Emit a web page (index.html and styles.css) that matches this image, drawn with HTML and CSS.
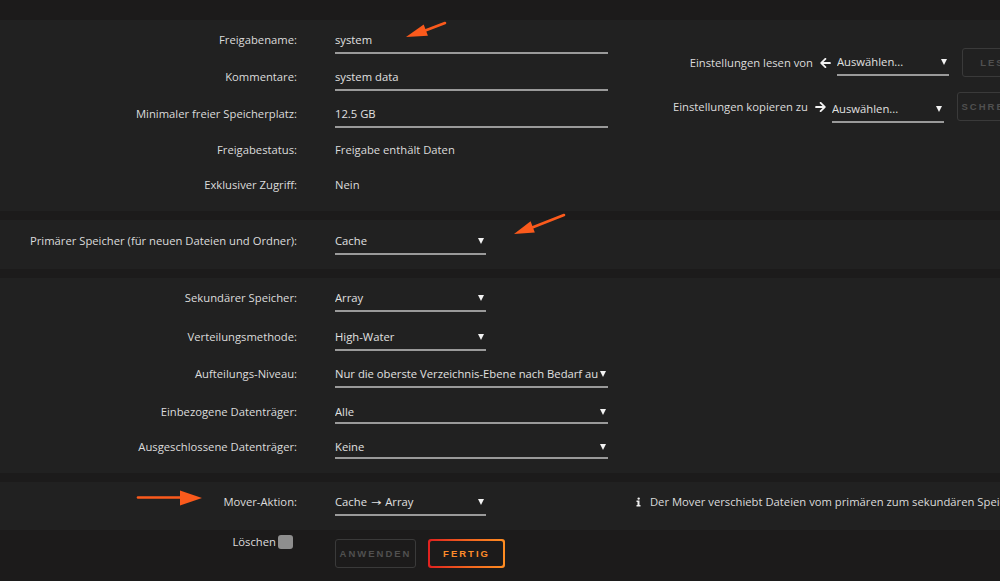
FILE: index.html
```html
<!DOCTYPE html>
<html lang="de">
<head>
<meta charset="utf-8">
<title>Freigabe system</title>
<link rel="stylesheet" href="styles.css">
</head>
<body>
<div class="topbar"></div>
<div class="panels">
  <section class="panel p1">
    <div class="form">
      <div class="row r37">
        <label class="lbl">Freigabename:</label>
        <div class="field long"><span class="txt">system</span></div>
      </div>
      <div class="row r37">
        <label class="lbl">Kommentare:</label>
        <div class="field long"><span class="txt">system data</span></div>
      </div>
      <div class="row r37">
        <label class="lbl">Minimaler freier Speicherplatz:</label>
        <div class="field long"><span class="txt">12.5 GB</span></div>
      </div>
      <div class="row r35">
        <label class="lbl">Freigabestatus:</label>
        <div class="val">Freigabe enthält Daten</div>
      </div>
      <div class="row r35">
        <label class="lbl">Exklusiver Zugriff:</label>
        <div class="val">Nein</div>
      </div>
    </div>
    <div class="clone">
      <div class="crow">
        <span class="clbl">Einstellungen lesen von</span>
        <svg class="arrow" viewBox="0 0 448 512" aria-hidden="true"><path d="M257.5 445.1l-22.2 22.2c-9.4 9.4-24.6 9.4-33.9 0L7 273c-9.4-9.4-9.4-24.6 0-33.9L201.4 44.7c9.4-9.4 24.6-9.4 33.9 0l22.2 22.2c9.5 9.5 9.3 25-.4 34.3L136.6 216H424c13.3 0 24 10.7 24 24v32c0 13.3-10.7 24-24 24H136.6l120.5 114.8c9.8 9.3 10 24.8.4 34.3z"/></svg>
        <div class="field small"><span class="txt">Auswählen...</span><span class="caret"></span></div>
        <button class="btn btn-off read">Lesen</button>
      </div>
      <div class="crow">
        <span class="clbl">Einstellungen kopieren zu</span>
        <svg class="arrow" viewBox="0 0 448 512" aria-hidden="true"><path d="M190.5 66.9l22.2-22.2c9.4-9.4 24.6-9.4 33.9 0L441 239c9.4 9.4 9.4 24.6 0 33.9L246.6 467.3c-9.4 9.4-24.6 9.4-33.9 0l-22.2-22.2c-9.5-9.5-9.3-25 .4-34.3L311.4 296H24c-13.3 0-24-10.7-24-24v-32c0-13.3 10.7-24 24-24h287.4L190.9 101.2c-9.8-9.3-10-24.8-.4-34.3z"/></svg>
        <div class="field small low"><span class="txt">Auswählen...</span><span class="caret"></span></div>
        <button class="btn btn-off write">Schreiben</button>
      </div>
    </div>
  </section>

  <section class="panel p2">
    <div class="row r37">
      <label class="lbl">Primärer Speicher (für neuen Dateien und Ordner):</label>
      <div class="field mid"><span class="txt">Cache</span><span class="caret"></span></div>
    </div>
  </section>

  <section class="panel p3">
    <div class="row r39">
      <label class="lbl">Sekundärer Speicher:</label>
      <div class="field mid"><span class="txt">Array</span><span class="caret"></span></div>
    </div>
    <div class="row r37">
      <label class="lbl">Verteilungsmethode:</label>
      <div class="field mid"><span class="txt">High-Water</span><span class="caret"></span></div>
    </div>
    <div class="row r39">
      <label class="lbl">Aufteilungs-Niveau:</label>
      <div class="field long"><span class="txt">Nur die oberste Verzeichnis-Ebene nach Bedarf au</span><span class="caret tight"></span></div>
    </div>
    <div class="row r35">
      <label class="lbl">Einbezogene Datenträger:</label>
      <div class="field long compact"><span class="txt">Alle</span><span class="caret"></span></div>
    </div>
    <div class="row r35">
      <label class="lbl">Ausgeschlossene Datenträger:</label>
      <div class="field long compact"><span class="txt">Keine</span><span class="caret"></span></div>
    </div>
  </section>

  <section class="panel p4">
    <div class="row r37">
      <label class="lbl">Mover-Aktion:</label>
      <div class="valrow">
        <div class="field mid"><span class="txt">Cache <span class="to">→</span> Array</span><span class="caret"></span></div>
        <p class="info">
          <svg class="info-ico" viewBox="0 0 6 11" aria-hidden="true"><circle cx="3.2" cy="1.4" r="1.4"/><path d="M0.6 3.8h3.6v5.4h1.2v1.6H0.6V9.2h1.2V5.4H0.6z"/></svg>
          Der Mover verschiebt Dateien vom primären zum sekundären Speicher.
        </p>
      </div>
    </div>
  </section>
</div>

<div class="actions">
  <div class="del"><span>Löschen</span><span class="chk"></span></div>
  <div class="btns">
    <button class="btn btn-off apply">Anwenden</button>
    <button class="btn done"><span>Fertig</span></button>
  </div>
</div>

<svg class="notes" width="1000" height="581" viewBox="0 0 1000 581" aria-hidden="true">
  <g fill="#fb5a1c" stroke="#fb5a1c">
    <line x1="445" y1="23" x2="424" y2="31" stroke-width="2.6" stroke-linecap="round"/>
    <polygon points="406,37 423.7,24.5 427.9,35.7" stroke="none"/>
    <line x1="564" y1="215" x2="531" y2="228" stroke-width="2.6" stroke-linecap="round"/>
    <polygon points="514,234 530.6,221.3 534.8,232.5" stroke="none"/>
    <line x1="138" y1="497.5" x2="182" y2="497.5" stroke-width="2.6" stroke-linecap="round"/>
    <polygon points="202,498 180,490.5 180,505.5" stroke="none"/>
  </g>
</svg>
</body>
</html>
```

FILE: styles.css
```css
* {
  box-sizing: border-box;
  margin: 0;
  padding: 0;
}

html,
body {
  width: 1000px;
  height: 581px;
  overflow: hidden;
}

body {
  position: relative;
  background: #1c1b1b;
  font-family: "Open Sans", "Liberation Sans", sans-serif;
  font-size: 11.25px;
  color: #dcdcdc;
}

.topbar {
  height: 20px;
}

.panels {
  display: flex;
  flex-direction: column;
  gap: 9px;
}

.panel {
  background: #212121;
  overflow: hidden;
}

.p1 {
  display: flex;
  padding: 8px 0 2px;
}

.p2 {
  padding: 9px 0 3px;
}

.p3 {
  padding: 8px 0 2px;
}

.p4 {
  padding: 8px 0 3px;
}

/* form rows */
.form {
  flex: none;
  width: 608px;
}

.row {
  display: grid;
  grid-template-columns: 297px 1fr;
  column-gap: 38px;
  align-items: baseline;
}

.r35 { height: 35px; }
.r37 { height: 37px; }
.r39 { height: 39px; }

.lbl {
  text-align: right;
  line-height: 22px;
  white-space: nowrap;
}

.val {
  line-height: 22px;
}

.valrow {
  display: flex;
  align-items: baseline;
}

/* input / select */
.field {
  display: flex;
  align-items: center;
  height: 26px;
  border-bottom: 2px solid #9a9a9a;
  line-height: 22px;
  color: #e0e0e0;
}

.field.compact {
  height: 22px;
  line-height: 20px;
  margin-top: 1px;
}

.field .txt {
  flex: 1;
  min-width: 0;
  overflow: hidden;
  white-space: nowrap;
}

.to {
  font-family: "DejaVu Sans", sans-serif;
  font-size: 10px;
  display: inline-block;
  transform: scaleX(1.25);
  margin: 0 2px;
}

.long { width: 273px; }
.mid { width: 151px; }
.small { width: 112px; }

.caret {
  flex: none;
  width: 0;
  height: 0;
  margin: 0 2px 0 4px;
  border-left: 3px solid transparent;
  border-right: 3px solid transparent;
  border-top: 6px solid #f2f2f2;
}

.caret.tight {
  margin-left: 0;
}

/* clone settings */
.clone {
  flex: none;
  width: 432px;
  padding-top: 20px;
  display: flex;
  flex-direction: column;
  align-items: flex-end;
  gap: 15px;
}

.crow {
  display: flex;
  align-items: center;
  height: 29px;
}

.clbl {
  white-space: nowrap;
}

.arrow {
  width: 11px;
  height: 12px;
  fill: #f4f4f4;
  margin: 0 6px 0 7px;
}

.field.low {
  margin-top: 6px;
}

.crow .btn {
  margin-left: 13px;
}

/* buttons */
.btn {
  height: 29px;
  min-width: 0;
  padding: 0;
  border-radius: 3px;
  background: transparent;
  font-family: "Liberation Sans", Arial, sans-serif;
  font-weight: 700;
  font-size: 9.5px;
  letter-spacing: 2px;
  text-transform: uppercase;
  white-space: nowrap;
  overflow: hidden;
}

.btn-off {
  border: 1px solid #3a3a3a;
  color: #505050;
}

.read {
  width: 78px;
}

.write {
  width: 83px;
}

/* bottom actions */
.actions {
  display: grid;
  grid-template-columns: 297px 1fr;
  column-gap: 38px;
  padding-top: 2px;
  align-items: start;
}

.del {
  display: flex;
  justify-content: flex-end;
  align-items: center;
  gap: 2px;
  padding-right: 4px;
  line-height: 20px;
}

.chk {
  width: 15px;
  height: 14px;
  border-radius: 3px;
  background: #8e8e8e;
}

.btns {
  display: flex;
  gap: 12px;
  margin-top: 7px;
}

.apply {
  width: 81px;
}

.done {
  width: 77px;
  padding: 2px;
  border: none;
  background: linear-gradient(90deg, #e0201f 0%, #f0621f 50%, #ff8d21 100%);
}

.done span {
  display: flex;
  align-items: center;
  justify-content: center;
  height: 100%;
  border-radius: 2px;
  background: #1c1b1b;
  color: #ff8c2a;
}

/* info line */
.info {
  margin-left: 150px;
  white-space: nowrap;
  color: #dcdcdc;
}

.info-ico {
  width: 5px;
  height: 10px;
  fill: #eeeeee;
  margin-right: 6px;
  vertical-align: -1px;
}

/* annotation arrows */
.notes {
  position: absolute;
  left: 0;
  top: 0;
  pointer-events: none;
}
```
